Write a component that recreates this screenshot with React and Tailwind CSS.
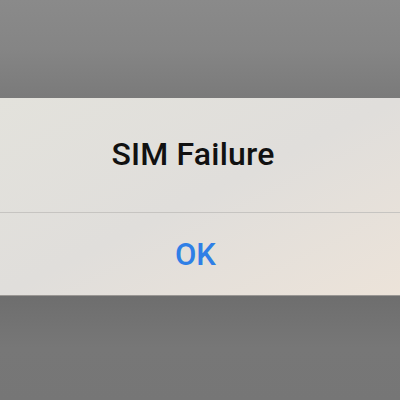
export default function App() {
  return (
    <div className="flex h-[400px] w-[400px] flex-col font-['Roboto',sans-serif]">
      <div className="h-[98px] bg-gradient-to-b from-[#8a8a8a] via-[#858585] to-[#7a7a7a]" />
      <div className="flex h-[197px] flex-col bg-gradient-to-br from-[#e3e2dc] via-[#e0dedb] to-[#ece3d9]">
        <div className="flex h-[114px] items-center justify-center pr-[14px] pb-[3px]">
          <span className="text-[32px] font-medium leading-none tracking-[0.2px] text-[#111]">SIM Failure</span>
        </div>
        <div className="h-px bg-[#c6c4c1]" />
        <div className="flex flex-1 items-center justify-center pr-[9px]">
          <span className="text-[31px] font-medium leading-none text-[#2f7fe6]">OK</span>
        </div>
      </div>
      <div className="flex-1 border-t border-[#9a9794] bg-gradient-to-b from-[#6e6e6e] via-[#777] to-[#767676]" />
    </div>
  );
}
